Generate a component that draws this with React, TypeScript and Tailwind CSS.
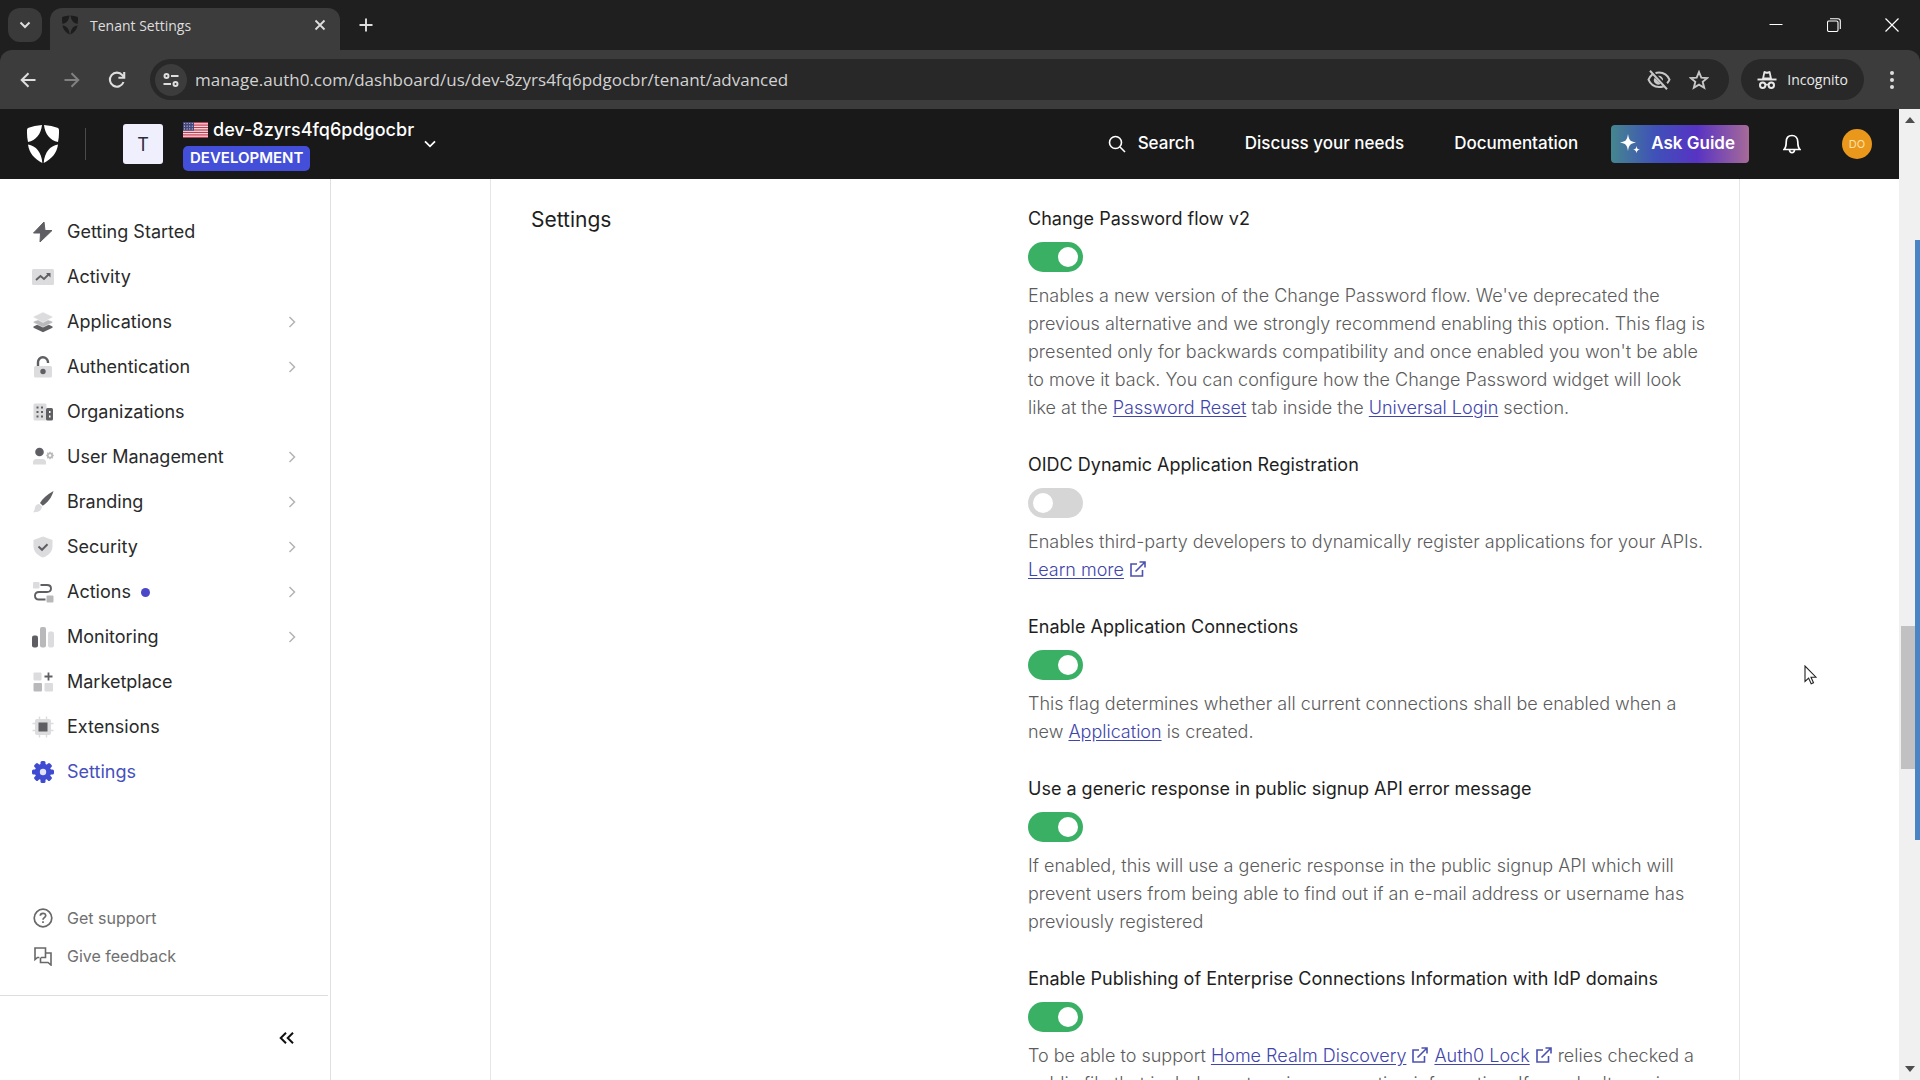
import React, { useState } from "react";

const DARK = "#5f5f63";
const MID = "#b9b9bb";
const LIGHT = "#dcdcde";

function Shield({ className }: { className: string }) {
  return (
    <svg viewBox="0 0 32 38" className={className} fill="currentColor" aria-hidden="true">
      <path d="M15 0C14 9 9 15.500 1 17 .3 14 0 11 0 8V5Q0 3.200 1.600 2.700 7 .7 15 0Z" />
      <path d="M17 0C18 9 23 15.500 31 17 31.700 14 32 11 32 8V5Q32 3.200 30.400 2.700 25 .7 17 0Z" />
      <path d="M1 19.500C9 21 14.500 27 15.300 38 8 34.500 2 28 1 19.500Z" />
      <path d="M31 19.500C23 21 17.500 27 16.700 38 24 34.500 30 28 31 19.500Z" />
    </svg>
  );
}

function Flag() {
  return (
    <svg viewBox="0 0 25 16" className="h-4 w-[25px] shrink-0" aria-hidden="true">
      <rect width="25" height="16" fill="#f4e9ea" />
      {[0, 2, 4, 6, 8, 10, 12].map((n) => (
        <rect key={n} y={n * 1.231} width="25" height="1.231" fill="#c43a50" />
      ))}
      <rect width="11" height="8.600" fill="#45457c" />
      {[1.5, 4.2, 6.900].map((y) =>
        [1.5, 4.100, 6.700, 9.300].map((x) => <circle key={`${x}-${y}`} cx={x} cy={y} r="0.600" fill="#c9c9dd" />),
      )}
    </svg>
  );
}

const icons: Record<string, React.ReactNode> = {
  bolt: <path d="M12 1 1.500 12h7L8 21 20 9.500h-7z" fill={DARK} stroke={DARK} strokeLinejoin="round" />,
  activity: (
    <>
      <rect x="0" y="3" width="22" height="16" rx="1.500" fill={LIGHT} />
      <path d="M4 14l4.500-4 3.500 3 5-5" fill="none" stroke={DARK} strokeWidth="1.800" />
      <path d="M14 7h4.500v4.500z" fill={DARK} />
    </>
  ),
  layers: (
    <>
      <path d="M1.500 15.500 11 11l9.500 4.500v1.200L11 21.300l-9.500-4.600z" fill={DARK} />
      <path d="M1.500 10.500 11 7l9.500 3.500v1.300L11 16.200l-9.500-4.400z" fill={MID} stroke="#fff" strokeWidth=".5" />
      <path d="M1.500 5.500 11 1l9.500 4.500v1L11 11.500 1.500 6.500z" fill={LIGHT} stroke="#fff" strokeWidth=".5" />
    </>
  ),
  lock: (
    <>
      <rect x="2" y="10" width="18" height="11.500" rx="1.500" fill={LIGHT} />
      <path d="M6 10V6.500a5 5 0 0 1 10-.5v1" fill="none" stroke={DARK} strokeWidth="2.400" />
      <circle cx="11" cy="15.500" r="2.700" fill={DARK} />
    </>
  ),
  building: (
    <>
      <rect x="1.500" y="2.500" width="13" height="17" rx="1.500" fill={LIGHT} />
      <rect x="14" y="7" width="7" height="12.500" rx="1.500" fill={DARK} />
      {[6, 10.500, 15].map((y) => [4.500, 9].map((x) => <rect key={`${x}-${y}`} x={x} y={y - 0.500} width="2" height="2" fill={DARK} />))}
      <path d="M17 10h1.500v2H17zM17 14.500h1.500v2H17z" fill="#fff" />
    </>
  ),
  users: (
    <>
      <circle cx="7.500" cy="6" r="4.300" fill={DARK} />
      <path d="M1 18.500v-2q0-3.500 3.500-3.500h6q3.500 0 3.500 3.500v2z" fill={LIGHT} />
      <circle cx="18" cy="9.500" r="2.200" fill="none" stroke={MID} strokeWidth="1.700" />
      <path d="M18 5.700v1.800M18 11.500v1.800M14.200 9.500H16M20 9.500h1.800M15.300 6.800l1.300 1.300M19.400 10.900l1.300 1.300M20.700 6.800l-1.300 1.300M16.600 10.900l-1.300 1.300" stroke={MID} strokeWidth="1.300" />
    </>
  ),
  brush: (
    <>
      <path d="M21.500 0C15 3.500 10.500 7.500 8 12l2.800 2.800C15.500 11.500 19.500 7 21.500 0z" fill={DARK} />
      <path d="M7.200 13 10 15.800C9.500 20 6 21.500 1 21.200c2-1.700 1.500-3.200 2-5C3.600 14 5.300 13 7.200 13z" fill={LIGHT} />
    </>
  ),
  security: (
    <>
      <path d="M11 .5 20.500 4v6c0 6-4 9.500-9.500 11.500C5.500 19.500 1.500 16 1.500 10V4z" fill={LIGHT} />
      <path d="M6.500 10.500 10 13.800l5.500-5.500" fill="none" stroke={DARK} strokeWidth="2" />
    </>
  ),
  actions: (
    <>
      <rect x="1" y="1" width="6.500" height="6.500" rx="1" fill={LIGHT} />
      <rect x="14.500" y="14.500" width="7" height="7" rx="1" fill={MID} />
      <path d="M8.500 4H15q4 0 4 3.500T15 11H7q-4 0-4 3.700T7 18.500h6.500" fill="none" stroke={DARK} strokeWidth="1.900" />
    </>
  ),
  bars: (
    <>
      <rect x="0" y="9.500" width="6" height="12" rx="2" fill={DARK} />
      <rect x="8" y="1" width="6" height="20.500" rx="2" fill={MID} />
      <rect x="16" y="5.500" width="6" height="16" rx="2" fill={LIGHT} />
    </>
  ),
  market: (
    <>
      <rect x="1.500" y="1.500" width="8" height="8" rx="1" fill={LIGHT} />
      <rect x="1.500" y="12" width="8.500" height="8.500" rx="1" fill={MID} />
      <rect x="12.500" y="12" width="8.500" height="8.500" rx="1" fill={LIGHT} />
      <path d="M16.500 1.500v8M12.500 5.500h8" stroke={DARK} strokeWidth="1.800" />
    </>
  ),
  chip: (
    <>
      <rect x="3" y="3" width="16" height="16" rx="2" fill={LIGHT} />
      <path d="M7.500 .5v21M14.500 .5v21M.5 7.500h21M.5 14.500h21" fill="none" stroke={LIGHT} strokeWidth="1.400" />
      <rect x="6.500" y="6.500" width="9" height="9" fill={DARK} />
    </>
  ),
  gear: (
    <>
      {[0, 45, 90, 135].map((a) => (
        <rect key={a} x="8.500" y="0" width="5" height="22" rx="1.500" fill="#3f4bd1" transform={`rotate(${a} 11 11)`} />
      ))}
      <circle cx="11" cy="11" r="8.200" fill="#3f4bd1" />
      <circle cx="11" cy="11" r="3.200" fill="#dfe2fa" />
    </>
  ),
};

const nav = [
  { label: "Getting Started", icon: "bolt" },
  { label: "Activity", icon: "activity" },
  { label: "Applications", icon: "layers", more: true },
  { label: "Authentication", icon: "lock", more: true },
  { label: "Organizations", icon: "building" },
  { label: "User Management", icon: "users", more: true },
  { label: "Branding", icon: "brush", more: true },
  { label: "Security", icon: "security", more: true },
  { label: "Actions", icon: "actions", more: true, dot: true },
  { label: "Monitoring", icon: "bars", more: true },
  { label: "Marketplace", icon: "market" },
  { label: "Extensions", icon: "chip" },
  { label: "Settings", icon: "gear", active: true },
];

function BrowserChrome() {
  return (
    <div className="shrink-0 bg-[#1f1f1f] font-['Open_Sans',sans-serif] text-[#dedede]">
      <div className="flex h-[50px] items-end">
        <button aria-label="Search tabs" className="mb-2 ml-2 grid h-[34px] w-[34px] place-items-center rounded-xl bg-[#3a3a3a]">
          <svg viewBox="0 0 12 8" className="h-2 w-3" fill="none" stroke="currentColor" strokeWidth="2"><path d="m1.500 1.500 4.500 4.500 4.500-4.500" /></svg>
        </button>
        <div className="ml-2 flex h-[42px] w-[290px] items-center rounded-t-xl bg-[#3c3c3c] px-3 pb-2">
          <Shield className="h-5 w-4 text-[#1d1d1d]" />
          <span className="ml-3 flex-1 text-[14px]">Tenant Settings</span>
          <button aria-label="Close tab" className="grid h-4 w-4 place-items-center">
            <svg viewBox="0 0 12 12" className="h-3 w-3" stroke="currentColor" strokeWidth="1.800"><path d="m1.500 1.500 9 9m0-9-9 9" /></svg>
          </button>
        </div>
        <button aria-label="New tab" className="mb-[15px] ml-4 grid h-5 w-5 place-items-center">
          <svg viewBox="0 0 14 14" className="h-3.5 w-3.5" stroke="currentColor" strokeWidth="1.900"><path d="M7 .5v13M.5 7h13" /></svg>
        </button>
        <div className="ml-auto flex h-full items-center gap-11 pr-[21px] text-white">
          <button aria-label="Minimize"><svg viewBox="0 0 14 14" className="h-3.5 w-3.5" stroke="currentColor"><path d="M.5 6.500h13" /></svg></button>
          <button aria-label="Restore"><svg viewBox="0 0 14 14" className="h-3.5 w-3.5" fill="none" stroke="currentColor" strokeWidth="1.100"><rect x=".5" y="3" width="10.500" height="10.500" rx="1.500" /><path d="M3 .8h8q2.300 0 2.300 2.300v8" /></svg></button>
          <button aria-label="Close"><svg viewBox="0 0 14 14" className="h-3.5 w-3.5" stroke="currentColor" strokeWidth="1.200"><path d="m.5.5 13 13m0-13-13 13" /></svg></button>
        </div>
      </div>
      <div className="flex h-[59px] items-center rounded-t-xl bg-[#3c3c3c] pl-5 pr-[26px]">
        <button aria-label="Back"><svg viewBox="0 0 16 16" className="h-4 w-4" fill="none" stroke="currentColor" strokeWidth="2"><path d="M15.500 8H2m6.500-6.800L1.700 8l6.800 6.800" /></svg></button>
        <button aria-label="Forward" className="ml-7 text-[#818181]"><svg viewBox="0 0 16 16" className="h-4 w-4" fill="none" stroke="currentColor" strokeWidth="2"><path d="M.5 8H14M7.500 1.200 14.300 8l-6.800 6.800" /></svg></button>
        <button aria-label="Reload" className="ml-7"><svg viewBox="0 0 18 18" className="h-[18px] w-[18px]" fill="none" stroke="currentColor" strokeWidth="2.100"><path d="M15.500 11A7 7 0 1 1 14.300 4.200L15.800 6" /><path d="M16.200 1v5.800h-5.800" /></svg></button>
        <div className="ml-6 flex h-[41px] flex-1 items-center rounded-full bg-[#282828] pl-[5px] pr-5">
          <button aria-label="Site information" className="grid h-8 w-8 shrink-0 place-items-center rounded-full bg-[#3c3c3c]">
            <svg viewBox="0 0 16 16" className="h-4 w-4" fill="none" stroke="currentColor" strokeWidth="2"><circle cx="3.500" cy="4" r="2" /><path d="M8 4h7.500M.5 12H8" /><circle cx="12.500" cy="12" r="2" /></svg>
          </button>
          <input
            aria-label="Address"
            type="text"
            defaultValue="manage.auth0.com/dashboard/us/dev-8zyrs4fq6pdgocbr/tenant/advanced"
            className="ml-2 min-w-0 flex-1 bg-transparent text-[17px] text-[#d2d2d2] outline-none"
          />
          <button aria-label="Third-party cookies blocked" className="text-[#c7c7c7]">
            <svg viewBox="0 0 24 20" className="h-5 w-6" fill="none" stroke="currentColor" strokeWidth="2"><path d="M5.200 4.600C3.600 5.800 2.400 7.500 1.500 9.700 3.400 14.300 7.300 17 12 17q2.500 0 4.600-.8M8.500 3Q10 2.500 12 2.500c4.700 0 8.600 2.700 10.500 7.200q-.9 2-2.400 3.500M3 .8l17 18.500" /><path d="M7.700 7.800a4.300 4.300 0 0 0 6 6zM11 5.800a4.200 4.200 0 0 1 5 5z" fill="currentColor" stroke="none" /></svg>
          </button>
          <button aria-label="Bookmark" className="ml-[18px] text-[#c7c7c7]">
            <svg viewBox="0 0 20 20" className="h-5 w-5" fill="none" stroke="currentColor" strokeWidth="1.900"><path d="m10 2 2.300 5.600 6 .4-4.600 3.900 1.500 5.900L10 14.600l-5.200 3.200 1.500-5.900L1.700 8l6-.4z" /></svg>
          </button>
        </div>
        <div className="ml-3 flex h-[41px] items-center rounded-full bg-[#282828] pl-4 pr-4">
          <svg viewBox="0 0 20 20" className="h-5 w-5" stroke="#e8e8e8"><path d="M5 9 6.500 2q.3-1.300 1.500-.8 2 .9 4 0 1.200-.5 1.500.8L15 9z" fill="#e8e8e8" stroke="none" /><path d="M8 3.500 7.200 7.500h5.600L12 3.500q-2 .6-4 0z" fill="#282828" stroke="none" /><path d="M.5 9.500h19" strokeWidth="1.900" fill="none" /><circle cx="5.700" cy="15.300" r="2.700" strokeWidth="2" fill="none" /><circle cx="14.300" cy="15.300" r="2.700" strokeWidth="2" fill="none" /><path d="M8 15q2-1.200 4 0" strokeWidth="1.500" fill="none" /></svg>
          <span className="ml-2.5 pb-px text-[14px] text-[#e8e8e8]">Incognito</span>
        </div>
        <button aria-label="Menu" className="ml-[26px]"><svg viewBox="0 0 4 18" className="h-[18px] w-1" fill="currentColor"><circle cx="2" cy="2" r="2" /><circle cx="2" cy="9" r="2" /><circle cx="2" cy="16" r="2" /></svg></button>
      </div>
    </div>
  );
}

function Header() {
  return (
    <header className="flex h-[70px] shrink-0 items-center bg-[#191919] pl-[27px] pr-[27px] text-[17px] font-medium text-white">
      <Shield className="h-[38px] w-8" />
      <div className="ml-[26px] h-8 w-px bg-[#4a4a4a]" />
      <div className="ml-[37px] grid h-10 w-10 place-items-center rounded-[3px] bg-[#f0effd] text-[18px] font-normal text-[#2b2b3c]">T</div>
      <button className="ml-5 flex items-center text-left text-[18px]" aria-label="Switch tenant">
        <span>
          <span className="flex h-6 items-center gap-[5px]"><Flag />dev-8zyrs4fq6pdgocbr</span>
          <span className="mt-1 flex h-[25px] w-fit items-center rounded-[5px] bg-[#434fd8] px-[7px] text-[15px] font-semibold">DEVELOPMENT</span>
        </span>
        <svg viewBox="0 0 12 8" className="ml-2.5 h-2 w-3" fill="none" stroke="currentColor" strokeWidth="1.800"><path d="m1 1.300 5 5 5-5" /></svg>
      </button>
      <nav className="ml-auto flex items-center">
        <button className="flex items-center gap-3">
          <svg viewBox="0 0 18 18" className="h-[18px] w-[18px]" fill="none" stroke="currentColor" strokeWidth="1.600"><circle cx="7.500" cy="7.500" r="6" /><path d="m12 12 5 5" /></svg>
          Search
        </button>
        <a href="#discuss" className="ml-[50px]">Discuss your needs</a>
        <a href="#docs" className="ml-[50px]">Documentation</a>
        <button className="ml-[33px] flex h-[38px] items-center gap-2.5 rounded bg-[linear-gradient(90deg,#45868f_0%,#3f51b8_32%,#5733c4_62%,#a76a98_100%)] pl-2 pr-3.5 font-semibold">
          <svg viewBox="0 0 22 22" className="h-[22px] w-[22px]" fill="currentColor"><path d="M9 1C10 7 11 8.500 17 9.500 11 10.500 10 12 9 18 8 12 7 10.500 1 9.500 7 8.500 8 7 9 1z" /><path d="M17.500 13c.4 2.600 1 3.200 3.500 3.700-2.500.4-3.100 1-3.500 3.600-.4-2.600-1-3.200-3.500-3.600 2.500-.5 3.100-1.100 3.500-3.700z" /></svg>
          Ask Guide
        </button>
        <button aria-label="Notifications" className="ml-[34px]">
          <svg viewBox="0 0 18 20" className="h-5 w-[18px]" fill="none" stroke="currentColor" strokeWidth="1.700"><path d="M1 15.500c2-2 2.200-3.500 2.200-7.500C3.200 4 5.500 1.500 9 1.500S14.800 4 14.800 8c0 4 .2 5.500 2.200 7.500zM6.500 16c.3 3.500 4.700 3.500 5 0" /></svg>
        </button>
        <button aria-label="Account" className="ml-[41px] grid h-[30px] w-[30px] place-items-center rounded-full bg-[#e9981c] text-[11px] font-normal text-[#ffe0a6]">DO</button>
      </nav>
    </header>
  );
}

function Sidebar() {
  return (
    <aside className="flex w-[331px] shrink-0 flex-col border-r border-[#e0e0e0] text-[18px] text-[#2a2a2a]">
      <nav className="pt-[30px]">
        {nav.map((n) => (
          <a key={n.label} href={`#${n.icon}`} className={n.active ? "flex h-[45px] items-center pl-8 pr-[34px] text-[#4650bd]" : "flex h-[45px] items-center pl-8 pr-[34px]"}>
            <svg viewBox="0 0 22 22" className="h-[22px] w-[22px]" aria-hidden="true">{icons[n.icon]}</svg>
            <span className="ml-[13px]">{n.label}</span>
            {n.dot && <span className="ml-2.5 mt-0.5 h-[9px] w-[9px] rounded-full bg-[#4a48c8]" />}
            {n.more && <svg viewBox="0 0 8 12" className="ml-auto h-3 w-2" fill="none" stroke="#b4b4b4" strokeWidth="1.500"><path d="m1.500 1 5 5-5 5" /></svg>}
          </a>
        ))}
      </nav>
      <div className="mt-auto pb-5 text-[16px] text-[#707070]">
        <a href="#support" className="flex h-[38px] items-center pl-[33px]">
          <svg viewBox="0 0 20 20" className="h-5 w-5" fill="none" stroke="#686868" strokeWidth="1.700"><circle cx="10" cy="10" r="8.800" /><path d="M7.300 7.800c.2-3.500 5.600-3.200 5.400 0-.1 1.900-2.700 1.900-2.700 3.900" /><path d="M10 13.300v1.800" /></svg>
          <span className="ml-[14px]">Get support</span>
        </a>
        <a href="#feedback" className="flex h-[38px] items-center pl-[33px]">
          <svg viewBox="0 0 20 20" className="h-5 w-5" fill="none" stroke="#686868" strokeWidth="1.600"><path d="M6.300 11.500H4.500L2 13.500V2h10.500v9.500H8" /><path d="M12.500 7H18v12l-3-2.500H7.500v-5" /></svg>
          <span className="ml-[14px]">Give feedback</span>
        </a>
      </div>
      <div className="mr-0.5 flex h-[85px] items-center justify-end border-t border-[#dedede] pr-[34px]">
        <button aria-label="Collapse sidebar">
          <svg viewBox="0 0 15 12" className="h-3 w-[15px]" fill="none" stroke="#111" strokeWidth="2"><path d="M7 .7 1.700 6 7 11.300M14 .7 8.700 6l5.300 5.300" /></svg>
        </button>
      </div>
    </aside>
  );
}

function Link({ children, external }: { children: React.ReactNode; external?: boolean }) {
  return (
    <>
      <a href="#link" className="text-[#3f45ac] underline underline-offset-2">{children}</a>
      {external && (
        <svg viewBox="0 0 16 16" className="mx-1.5 -mt-1 inline h-4 w-4" fill="none" stroke="#4b51b0" strokeWidth="1.600"><path d="M7 3H1v12h11.500V9M9.500 1H15v5.500M15 1 5.500 10.500" /></svg>
      )}
    </>
  );
}

function Setting({ id, title, on, children }: { id: string; title: string; on: boolean; children: React.ReactNode }) {
  const [checked, setChecked] = useState(on);
  return (
    <section className="mb-[30px]">
      <label htmlFor={id} className="block h-[26px] leading-[26px] text-[#1e1e1e]">{title}</label>
      <input
        id={id}
        type="checkbox"
        role="switch"
        checked={checked}
        onChange={(e) => setChecked(e.target.checked)}
        className="my-2.5 block h-[30px] w-[55px] appearance-none rounded-full bg-[#d6d6d6] p-[5px] before:block before:h-5 before:w-5 before:rounded-full before:bg-white checked:bg-[#3ab065] checked:pl-[30px]"
      />
      <p className="font-light leading-[28px] text-[#5c5c5c]">{children}</p>
    </section>
  );
}

function Scrollbar() {
  return (
    <div className="relative flex w-[21px] shrink-0 flex-col items-center bg-[#f0f0f0]" aria-hidden="true">
      <svg viewBox="0 0 10 6" className="mt-2 h-1.5 w-2.5" fill="#4d4d4d"><path d="m5 0 5 6H0z" /></svg>
      <svg viewBox="0 0 10 6" className="mb-2 mt-auto h-1.5 w-2.5" fill="#4d4d4d"><path d="m5 6 5-6H0z" /></svg>
      <div className="absolute left-0.5 right-0 top-[517px] h-[143px] bg-[#c1c1c1]" />
      <div className="absolute right-0 top-[131px] h-[600px] w-[5px] bg-[#4a84c4]" />
    </div>
  );
}

export default function App() {
  return (
    <div className="flex h-screen flex-col overflow-hidden bg-white font-['Inter',sans-serif]">
      <BrowserChrome />
      <div className="flex min-h-0 flex-1">
        <div className="flex min-w-0 flex-1 flex-col">
          <Header />
          <div className="flex min-h-0 flex-1">
            <Sidebar />
            <main className="relative min-w-0 flex-1 overflow-hidden px-[159px]">
              <div className="flex border-x border-[#e6e6e6] pl-10 pr-[30px] pt-[27px]">
                <h2 className="flex-1 text-[21px] leading-[28px] text-[#1e1e1e]">Settings</h2>
                <div className="w-[681px] text-[18px]">
                  <Setting id="password" title="Change Password flow v2" on>
                    Enables a new version of the Change Password flow. We've deprecated the previous alternative and we strongly recommend enabling this option. This flag is presented only for backwards compatibility and once enabled you won't be able to move it back. You can configure how the Change Password widget will look like at the <Link>Password Reset</Link> tab inside the <Link>Universal Login</Link> section.
                  </Setting>
                  <Setting id="oidc" title="OIDC Dynamic Application Registration" on={false}>
                    Enables third-party developers to dynamically register applications for your APIs. <Link external>Learn more</Link>
                  </Setting>
                  <Setting id="connections" title="Enable Application Connections" on>
                    This flag determines whether all current connections shall be enabled when a new <Link>Application</Link> is created.
                  </Setting>
                  <Setting id="generic" title="Use a generic response in public signup API error message" on>
                    If enabled, this will use a generic response in the public signup API which will prevent users from being able to find out if an e-mail address or username has previously registered
                  </Setting>
                  <Setting id="idp" title="Enable Publishing of Enterprise Connections Information with IdP domains" on>
                    To be able to support <Link external>Home Realm Discovery</Link><Link external>Auth0 Lock</Link>relies checked a public file that includes enterprise connection information. If you don't require
                  </Setting>
                </div>
              </div>
              <svg viewBox="0 0 13 20" className="absolute left-[1473px] top-[486px] h-5 w-[13px]" fill="#fff" stroke="#222" strokeWidth="1.100"><path d="M1 1v15.500l3.600-3.400 2.600 5.700 2.300-1-2.500-5.600H12z" /></svg>
            </main>
          </div>
        </div>
        <Scrollbar />
      </div>
    </div>
  );
}
